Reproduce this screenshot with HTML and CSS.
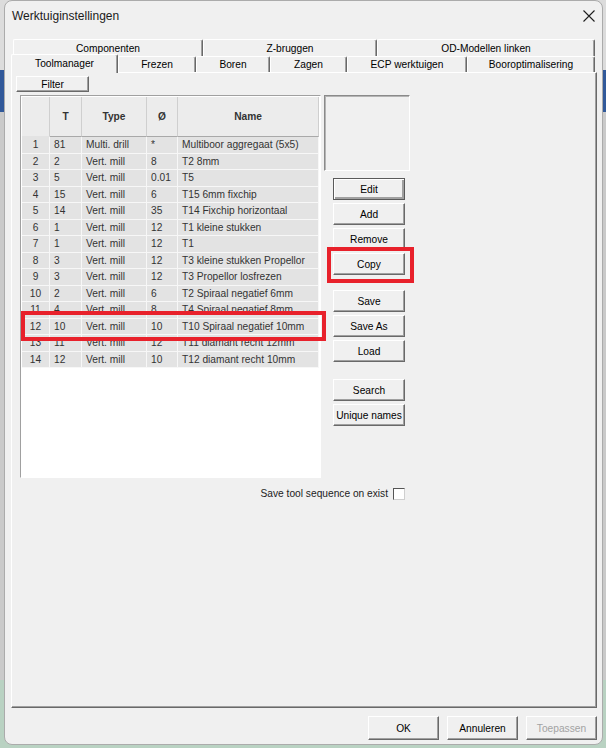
FILE: index.html
```html
<!DOCTYPE html>
<html>
    <head>
        <title>Werktuiginstellingen</title>
        <link rel="stylesheet" href="styles.css">
    </head>
    <body>
        <div class="window">
            <div class="titlebar">
                <span class="title">Werktuiginstellingen</span>
                <svg class="close" width="12" height="12" viewBox="0 0 12 12">
                    <path d="M0.5 0.5L11.5 11.5M11.5 0.5L0.5 11.5" stroke="#1e1e1e" stroke-width="1.1" fill="none"/>
                </svg>
            </div>

            <div class="tabs">
                <div class="tab-row back">
                    <div class="tab tab-componenten">Componenten</div>
                    <div class="tab tab-zbruggen">Z-bruggen</div>
                    <div class="tab tab-od">OD-Modellen linken</div>
                </div>
                <div class="tab-row front">
                    <div class="tab tab-toolmanager active">Toolmanager</div>
                    <div class="tab tab-frezen">Frezen</div>
                    <div class="tab tab-boren">Boren</div>
                    <div class="tab tab-zagen">Zagen</div>
                    <div class="tab tab-ecp">ECP werktuigen</div>
                    <div class="tab tab-booropt">Booroptimalisering</div>
                </div>

                <div class="panel">
                    <button class="btn filter-btn" type="button">Filter</button>

                    <div class="main">
                        <div class="grid-box">
                            <table class="tool-table">
                                <colgroup>
                                    <col class="c-num">
                                    <col class="c-t">
                                    <col class="c-type">
                                    <col class="c-dia">
                                    <col class="c-name">
                                </colgroup>
                                <thead>
                                    <tr><th></th><th>T</th><th>Type</th><th>Ø</th><th>Name</th></tr>
                                </thead>
                                <tbody>
                                    <tr><td class="num">1</td><td>81</td><td>Multi. drill</td><td>*</td><td>Multiboor aggregaat (5x5)</td></tr>
                                    <tr><td class="num">2</td><td>2</td><td>Vert. mill</td><td>8</td><td>T2 8mm</td></tr>
                                    <tr><td class="num">3</td><td>5</td><td>Vert. mill</td><td>0.01</td><td>T5</td></tr>
                                    <tr><td class="num">4</td><td>15</td><td>Vert. mill</td><td>6</td><td>T15 6mm fixchip</td></tr>
                                    <tr><td class="num">5</td><td>14</td><td>Vert. mill</td><td>35</td><td>T14 Fixchip horizontaal</td></tr>
                                    <tr><td class="num">6</td><td>1</td><td>Vert. mill</td><td>12</td><td>T1 kleine stukken</td></tr>
                                    <tr><td class="num">7</td><td>1</td><td>Vert. mill</td><td>12</td><td>T1</td></tr>
                                    <tr><td class="num">8</td><td>3</td><td>Vert. mill</td><td>12</td><td>T3 kleine stukken Propellor</td></tr>
                                    <tr><td class="num">9</td><td>3</td><td>Vert. mill</td><td>12</td><td>T3 Propellor losfrezen</td></tr>
                                    <tr><td class="num">10</td><td>2</td><td>Vert. mill</td><td>6</td><td>T2 Spiraal negatief 6mm</td></tr>
                                    <tr><td class="num">11</td><td>4</td><td>Vert. mill</td><td>8</td><td>T4 Spiraal negatief 8mm</td></tr>
                                    <tr><td class="num">12</td><td>10</td><td>Vert. mill</td><td>10</td><td>T10 Spiraal negatief 10mm</td></tr>
                                    <tr><td class="num">13</td><td>11</td><td>Vert. mill</td><td>12</td><td>T11 diamant recht 12mm</td></tr>
                                    <tr><td class="num">14</td><td>12</td><td>Vert. mill</td><td>10</td><td>T12 diamant recht 10mm</td></tr>
                                </tbody>
                            </table>
                        </div>

                        <div class="side">
                            <div class="preview"></div>
                            <div class="side-buttons">
                                <div class="btn-group">
                                    <button class="btn default" type="button">Edit</button>
                                    <button class="btn" type="button">Add</button>
                                    <button class="btn" type="button">Remove</button>
                                    <button class="btn" type="button">Copy</button>
                                </div>
                                <div class="btn-group save-group">
                                    <button class="btn" type="button">Save</button>
                                    <button class="btn" type="button">Save As</button>
                                    <button class="btn" type="button">Load</button>
                                </div>
                                <div class="btn-group search-group">
                                    <button class="btn" type="button">Search</button>
                                    <button class="btn" type="button">Unique names</button>
                                </div>
                            </div>
                        </div>
                    </div>

                    <label class="check-row">
                        <span>Save tool sequence on exist</span>
                        <span class="check"></span>
                    </label>
                </div>
            </div>

            <div class="footer">
                <button class="btn footer-btn" type="button">OK</button>
                <button class="btn footer-btn" type="button">Annuleren</button>
                <button class="btn footer-btn disabled" type="button">Toepassen</button>
            </div>
        </div>

        <!-- red annotation boxes -->
        <div class="mark mark-row"></div>
        <div class="mark mark-copy"></div>
    </body>
</html>
```

FILE: styles.css
```css
* {
    box-sizing: border-box;
}
html, body {
    margin: 0;
    height: 100%;
}
body {
    font-family: "Liberation Sans", Arial, sans-serif;
    font-size: 10.2px;
    color: #1a1a1a;
    overflow: hidden;
    background: linear-gradient(to bottom,
        #dcdcdc 0, #dcdcdc 70px,
        #31599a 70px, #31599a 112px,
        #cacaca 112px, #cacaca 680px,
        #b9d2c2 680px);
}

.window {
    margin-left: 4px;
    width: 599px;
    height: 745px;
    background: #f0f0f0;
    border: 1px solid #ababab;
    border-radius: 8px;
}

.titlebar {
    height: 29px;
    display: flex;
    align-items: center;
    padding: 0 7px;
    font-size: 12px;
    color: #1b1b1b;
}
.close {
    margin-left: auto;
}

/* tabs */
.tabs {
    margin: 9px 0 0 6px;
    width: 586px;
}
.tab-row {
    display: flex;
}
.tab-row.back {
    height: 17px;
    padding-left: 2px;
}
.tab-row.front {
    height: 16px;
    position: relative;
    z-index: 1;
}
.tab {
    height: 100%;
    display: flex;
    align-items: center;
    justify-content: center;
    color: #000;
    background: #f0f0f0;
    border-top: 1px solid #fff;
    border-left: 1px solid #fff;
    border-right: 1px solid #696969;
    box-shadow: inset -1px 0 #a0a0a0;
    border-radius: 2px 2px 0 0;
    white-space: nowrap;
}
.tab.active {
    height: 19px;
    margin-top: -2px;
    padding-bottom: 2px;
}
.tab-componenten { width: 190px; }
.tab-zbruggen { width: 174px; }
.tab-od { width: 218px; }
.tab-toolmanager { width: 107px; }
.tab-frezen { width: 78px; }
.tab-boren { width: 74px; }
.tab-zagen { width: 77px; }
.tab-ecp { width: 120px; }
.tab-booropt { width: 128px; }

.panel {
    height: 636px;
    border: 1px solid;
    border-color: #fff #696969 #696969 #fff;
    box-shadow: inset -1px -1px #a0a0a0;
    padding: 3px 4px;
}

/* buttons */
.btn {
    font: inherit;
    color: #000;
    background: #f0f0f0;
    border: 1px solid;
    border-color: #fff #696969 #696969 #fff;
    box-shadow: inset -1px -1px #a0a0a0;
    padding: 0;
    margin: 0;
    display: block;
    white-space: nowrap;
}
.btn.default {
    border-color: #5a5a5a;
    box-shadow: inset 1px 1px #fff, inset -2px -2px #a0a0a0;
}
.btn.disabled {
    color: #a3a3a3;
}
.filter-btn {
    width: 73px;
    height: 16px;
}

.main {
    display: flex;
    margin: 3px 0 0 4px;
}

.grid-box {
    width: 301px;
    height: 383px;
    background: #fff;
    border: 1px solid;
    border-color: #a0a0a0 #fff #fff #a0a0a0;
    padding: 1px;
    overflow: hidden;
}
.tool-table {
    border-collapse: separate;
    border-spacing: 0;
    table-layout: fixed;
    width: 297px;
    color: #333;
}
.c-num { width: 28px; }
.c-t { width: 32px; }
.c-type { width: 65px; }
.c-dia { width: 31px; }
.c-name { width: 141px; }
.tool-table th {
    height: 40px;
    padding: 0;
    background: #ececec;
    font-weight: bold;
    text-align: center;
    border-right: 1px solid #cfcfcf;
    border-bottom: 1px solid #a9a9a9;
}
.tool-table th:first-child {
    border-bottom-color: #e3e3e3;
}
.tool-table td {
    height: 16.5px;
    padding: 1px 0 0 4px;
    background: #e3e3e3;
    border-right: 1px solid #f7f7f7;
    border-bottom: 1px solid #f7f7f7;
    white-space: nowrap;
    overflow: hidden;
    line-height: 14px;
}
.tool-table td.num {
    text-align: center;
    padding: 1px 0 0;
}

.side {
    width: 86px;
    margin-left: 3px;
}
.preview {
    height: 76px;
    border: 1px solid;
    border-color: #8a8a8a #fff #fff #8a8a8a;
    box-shadow: inset 1px 1px #b4b4b4;
}
.side-buttons {
    margin: 7px 0 0 9px;
    width: 72px;
}
.btn-group {
    display: flex;
    flex-direction: column;
    gap: 3px;
}
.btn-group .btn {
    width: 72px;
    height: 22px;
}
.save-group {
    margin-top: 15px;
}
.search-group {
    margin-top: 17px;
}

.check-row {
    display: flex;
    justify-content: flex-end;
    align-items: center;
    gap: 5px;
    width: 389px;
    height: 13px;
    margin-top: 9px;
    color: #222;
}
.check {
    width: 12px;
    height: 12px;
    background: #fff;
    border: 1px solid;
    border-color: #555 #cfcfcf #cfcfcf #555;
}

.footer {
    display: flex;
    justify-content: flex-end;
    gap: 8px;
    margin-top: 8px;
    padding-right: 5px;
}
.footer-btn {
    width: 71px;
    height: 24px;
}

/* annotation overlays */
.mark {
    position: absolute;
    border: 4px solid #e8212b;
}
.mark-row {
    left: 21px;
    top: 311px;
    width: 305px;
    height: 30px;
}
.mark-copy {
    left: 327px;
    top: 247px;
    width: 87px;
    height: 36px;
}
```
